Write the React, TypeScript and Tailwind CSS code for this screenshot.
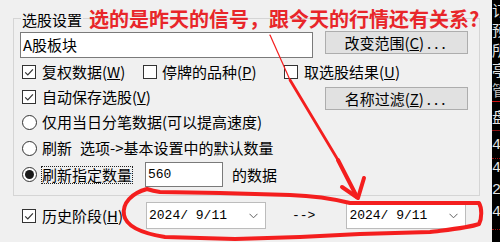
import React from "react";

const Check = ({ checked }: { checked?: boolean }) => (
  <span className="w-[14px] h-[14px] border border-[#333] bg-white flex items-center justify-center shrink-0">
    {checked && (
      <svg width="12" height="12" viewBox="0 0 12 12">
        <path d="M2.2 6.3 L4.8 8.9 L9.9 3.4" fill="none" stroke="#333" strokeWidth="1.2" />
      </svg>
    )}
  </span>
);

const Radio = ({ on }: { on?: boolean }) => (
  <span className="w-[15px] h-[15px] rounded-full border border-[#333] bg-white flex items-center justify-center shrink-0">
    {on && <span className="w-[9px] h-[9px] rounded-full bg-[#1a1a1a]" />}
  </span>
);

const Btn = ({ children, extra }: { children: React.ReactNode; extra?: string }) => (
  <div
    className={
      "w-[143px] h-[23px] border border-[#adadad] bg-[#e1e1e1] flex items-center justify-center leading-[20px] " +
      (extra ?? "")
    }
  >
    {children}
  </div>
);

const Chevron = () => (
  <svg width="9" height="6" viewBox="0 0 9 6">
    <path d="M0.5 0.8 L4.5 4.8 L8.5 0.8" fill="none" stroke="#606060" strokeWidth="1" />
  </svg>
);

const Combo = ({ value }: { value: string }) => (
  <div className="w-[120px] h-[27px] border border-[#bcbcbc] bg-white flex items-center justify-between pl-[2px] pr-[7px] shrink-0">
    <span className="font-['Liberation_Mono',monospace] text-[13px] whitespace-pre">{value}</span>
    <Chevron />
  </div>
);

export default function App() {
  return (
    <div className="w-[500px] h-[242px] relative overflow-hidden bg-[#f0f0f0] flex text-black font-['Noto_Sans_CJK_SC',sans-serif] text-[15px] leading-[20px]">
      <div className="w-[492px] flex flex-col shrink-0">
        {/* Group box */}
        <div className="ml-[13px] mt-[18px] w-[467px] h-[178px] border border-[#d5d5d5] flex flex-col pl-[6px] pr-[11px]">
          <span className="-mt-[9px] ml-[1px] self-start px-[1px] bg-[#f0f0f0] leading-[20px]">选股设置</span>

          <div className="flex justify-between items-start mt-[2px]">
            <div className="w-[293px] h-[26px] border border-[#7a7a7a] bg-white pl-[2px] flex items-center">
              A股板块
            </div>
            <Btn extra="-mt-[1px]">
              改变范围(<u>C</u>)<span className="ml-[3px] tracking-[3px]">...</span>
            </Btn>
          </div>

          <div className="mt-[1px] h-[25px] flex items-center pl-[2px]">
            <div className="w-[121px] flex items-center gap-[6px]">
              <Check checked />
              <span>
                复权数据(<u>W</u>)
              </span>
            </div>
            <div className="w-[141px] flex items-center gap-[5px]">
              <Check />
              <span>
                停牌的品种(<u>P</u>)
              </span>
            </div>
            <div className="flex items-center gap-[6px]">
              <Check />
              <span>
                取选股结果(<u>U</u>)
              </span>
            </div>
          </div>

          <div className="h-[25px] flex justify-between items-start pl-[2px]">
            <div className="h-[25px] flex items-center gap-[6px]">
              <Check checked />
              <span>
                自动保存选股(<u>V</u>)
              </span>
            </div>
            <Btn extra="mt-[3px]">
              名称过滤(<u>Z</u>)<span className="ml-[3px] tracking-[3px]">...</span>
            </Btn>
          </div>

          <div className="h-[26px] flex items-center gap-[5px] pl-[2px]">
            <Radio />
            <span>仅用当日分笔数据(可以提高速度)</span>
          </div>

          <div className="h-[26px] flex items-center gap-[5px] pl-[2px]">
            <Radio />
            <span>
              刷新<span className="ml-[8px]">选项-&gt;基本设置中的默认数量</span>
            </span>
          </div>

          <div className="h-[27px] flex items-center pl-[2px]">
            <Radio on />
            <span className="ml-[5px] outline outline-1 outline-dotted outline-[#222] leading-[16px]">刷新指定数量</span>
            <div className="ml-[13px] w-[78px] h-[25px] border border-[#7a7a7a] bg-white pl-[2px] flex items-center font-['Liberation_Mono',monospace] text-[13px]">
              560
            </div>
            <span className="ml-[9px]">的数据</span>
          </div>
        </div>

        {/* History row */}
        <div className="mt-[6px] h-[27px] flex items-center pl-[22px]">
          <div className="w-[124px] flex items-center gap-[6px]">
            <Check checked />
            <span>
              历史阶段(<u>H</u>)
            </span>
          </div>
          <Combo value="2024/ 9/11" />
          <span className="ml-[26px] font-['Liberation_Mono',monospace] text-[13px]">--&gt;</span>
          <div className="ml-[31px]">
            <Combo value="2024/ 9/11" />
          </div>
        </div>
      </div>

      {/* Black strip at right edge */}
      <div className="w-[8px] h-full bg-black overflow-hidden flex flex-col text-[#e6e6e6] text-[15px] leading-[20px] whitespace-nowrap">
        <span>订</span>
        <span>预</span>
        <span>所</span>
        <span>亭</span>
        <span className="text-[#bbb]">管</span>
        <span className="h-[1px] bg-[#d01010] mt-[1px]" />
        <span className="mt-[5px]">盘</span>
        <span className="h-[1px] bg-[#8a1010] mt-[3px]" />
        <span className="mt-[5px] font-['Liberation_Mono',monospace]">40</span>
        <span className="h-[1px] border-t border-dotted border-[#a01010] mt-[2px]" />
        <span className="font-['Liberation_Mono',monospace]">41</span>
        <span className="mt-[2px] font-['Liberation_Mono',monospace]">20</span>
        <span className="mt-[2px] font-['Liberation_Mono',monospace]">41</span>
        <span className="h-[1px] border-t border-dotted border-[#a01010] mt-[6px]" />
      </div>

      {/* Red annotation text */}
      <div className="absolute left-[89px] top-[9px] text-[20px] leading-[20px] font-bold text-[#e8262a] whitespace-nowrap">
        选的是昨天的信号，跟今天的行情还有关系?
      </div>

      {/* Red freehand annotations */}
      <svg className="absolute left-0 top-0 pointer-events-none" width="500" height="242" viewBox="0 0 500 242">
        <g fill="none" stroke="#f41e1e" strokeLinecap="round" strokeLinejoin="round">
          <path d="M270 35 L290 80" strokeWidth="1.2" />
          <path d="M290 80 L338 160" strokeWidth="2.8" />
          <path d="M338 160 L357 197" strokeWidth="4" />
          <path d="M342 187 L358 198 L364 178" strokeWidth="4" />
          <path
            d="M147 189 C132 193 122 203 124 215 C126 226 140 233 165 237 L235 239 L300 237 L360 234 L430 232 C445 230 468 228 479 224 C482 218 482 208 479 203 L350 203 C338 200 318 196 290 195 L220 193 L160 192 C153 191 150 190 147 189 Z"
            strokeWidth="4"
          />
        </g>
      </svg>
    </div>
  );
}
